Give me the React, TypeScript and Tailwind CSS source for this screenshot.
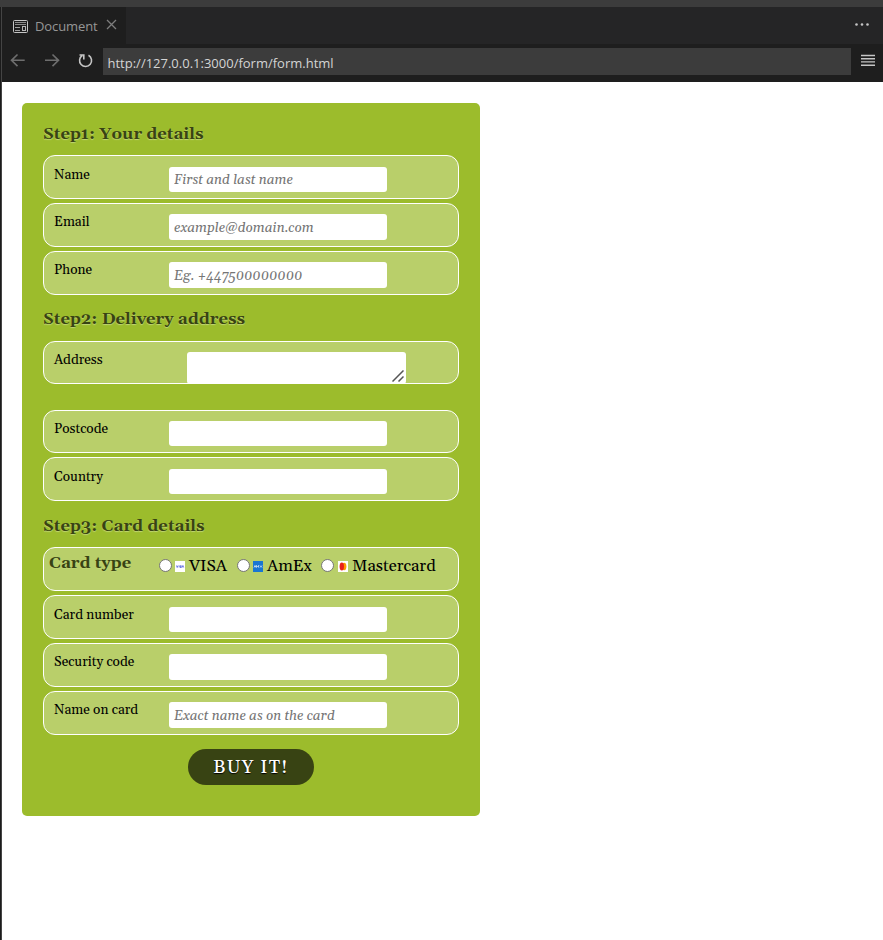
import React from "react";

const serif = "font-[Gelasio,Georgia,'Liberation_Serif',serif]";

function Heading({ children, className }: { children: string; className: string }) {
  return (
    <h2 className={`h-6 pl-[21px] text-[16.65px] leading-[28px] font-bold text-[#384313] [text-shadow:0_1px_1px_#c0d576] ${className}`}>
      {children}
    </h2>
  );
}

function Row({ label, className, field, placeholder }: { label: string; className: string; field: string; placeholder?: string }) {
  return (
    <div className={`mx-[21px] flex items-start rounded-[12px] border border-white bg-[#b9cf6a] ${className}`}>
      <label className="w-[115px] shrink-0 pl-[10px] text-[13.6px] leading-5 text-black">{label}</label>
      <input
        placeholder={placeholder}
        className={`ml-[10px] w-[218px] rounded-[3px] bg-white pl-[5px] text-[13.6px] italic outline-none placeholder:text-[#757575] placeholder:opacity-100 ${field}`}
      />
    </div>
  );
}

function Radio() {
  return <span className="mt-[11px] size-[13px] shrink-0 rounded-full border border-[#767676] bg-white" />;
}

export default function App() {
  return (
    <div className="flex h-[940px] w-[883px] flex-col overflow-hidden bg-white">
      <div className="h-[7px] shrink-0 bg-[#3c3c3c]" />
      <div className="flex min-h-0 flex-1">
        <div className="w-[2px] shrink-0 border-r border-[#444444] bg-[#1b1b1b]" />
        <div className="flex min-w-0 flex-1 flex-col font-['Open_Sans','Noto_Sans',sans-serif]">
          <div className="flex h-[37px] shrink-0 bg-[#252526]">
            <div className="flex w-[124px] items-center bg-[#1e1e1e] pl-[11px] text-[13px] text-[#969696]">
              <svg width="15" height="13" viewBox="0 0 15 13" className="shrink-0 translate-y-[1px]" fill="none">
                <rect x="0.5" y="0.5" width="14" height="12" rx="1" stroke="#c5c5c5" />
                <path d="M2 2.5h11M2 4.5h11" stroke="#8c8c8c" />
                <path d="M2 7.5h5M2 10.5h5" stroke="#a0a0a0" />
                <rect x="9.500" y="6.500" width="3" height="4" stroke="#b5b5b5" />
              </svg>
              <span className="ml-[7px] w-[64px] translate-y-[1px] tracking-[-0.1px]">Document</span>
              <svg width="11" height="11" viewBox="0 0 11 11" className="ml-[7px] -translate-y-[1px]" fill="none" stroke="#7d7d7d" strokeWidth="1.3">
                <path d="M1 1l9 9M10 1l-9 9" />
              </svg>
            </div>
            <div className="flex flex-1 justify-end pt-[16px] pr-[14px]">
              <svg width="14" height="3" viewBox="0 0 14 3" fill="#c5c5c5">
                <circle cx="1.5" cy="1.5" r="1.3" /><circle cx="7" cy="1.5" r="1.3" /><circle cx="12.5" cy="1.5" r="1.3" />
              </svg>
            </div>
          </div>
          <div className="flex h-[38px] shrink-0 items-start bg-[#1e1e1e] pt-1">
            <svg width="101" height="27" viewBox="0 0 101 27" fill="none" className="shrink-0">
              <path d="M9.5 12.3h13.2M15.5 6.5l-6 5.8 6 5.8" stroke="#6e6e6e" strokeWidth="1.6" />
              <path d="M43 12.3h13.2M50.500 6.5l6 5.800-6 5.800" stroke="#6e6e6e" strokeWidth="1.6" />
              <path d="M86.500 7.300A6 6 0 1 1 80.300 7.500M77.500 7h4.300v4.600" stroke="#c5c5c5" strokeWidth="1.6" />
            </svg>
            <div className="h-[27px] w-[748px] bg-[#3c3c3c] pl-[4.5px] text-[13px] leading-[30px] text-[#d4d4d4]">
              http://127.0.0.1:3000/form/form.html
            </div>
            <svg width="14" height="13" viewBox="0 0 14 13" className="mt-[6px] ml-[10px]" stroke="#c5c5c5" strokeWidth="1.4">
              <path d="M0 1.500h14M0 4.700h14M0 7.900h14M0 11.200h14" />
            </svg>
          </div>
          <main className="flex-1 bg-white pt-[21px] pl-[20px]">
            <form className={`flex h-[713px] w-[458px] flex-col rounded-[5px] bg-[#9cbc2c] ${serif}`}>
              <Heading className="mt-[18px]">Step1: Your details</Heading>
              <Row label="Name" placeholder="First and last name" className="mt-[10px] h-[44px] pt-[9px]" field="mt-[2px] h-[25px]" />
              <Row label="Email" placeholder="example@domain.com" className="mt-1 h-[44px] pt-[8px]" field="mt-[2px] h-[26px] pt-[2px]" />
              <Row label="Phone" placeholder="Eg. +447500000000" className="mt-1 h-[44px] pt-[8px]" field="mt-[2px] h-[26px] pt-[2px]" />
              <Heading className="mt-[11px]">Step2: Delivery address</Heading>
              <div className="mx-[21px] mt-[11px] flex h-[43px] items-start rounded-[12px] border border-white bg-[#b9cf6a]">
                <label className="w-[143px] shrink-0 pt-[8px] pl-[10px] text-[13.6px] leading-5 text-black">Address</label>
                <div className="mt-[10px] flex h-8 w-[219px] items-end justify-end rounded-[3px] bg-white pr-[2px] pb-[2px]">
                  <svg width="12" height="12" viewBox="0 0 12 12" stroke="#555" strokeWidth="1.5">
                    <path d="M.5 11.500l11-11M6.500 11.500l5-5" />
                  </svg>
                </div>
              </div>
              <Row label="Postcode" className="mt-[26px] h-[43px] pt-[8px]" field="mt-[2px] h-[25px]" />
              <Row label="Country" className="mt-1 h-[44px] pt-[9px]" field="mt-[2px] h-[25px]" />
              <Heading className="mt-[12px]">Step3: Card details</Heading>
              <div className="mx-[21px] mt-[10px] flex h-[44px] items-start rounded-[12px] border border-white bg-[#b9cf6a] text-[16.6px] leading-6 text-black">
                <h2 className="w-[115px] shrink-0 pt-[4px] pl-[5px] text-[16.65px] font-bold text-[#384313] [text-shadow:0_1px_1px_#c0d576]">Card type</h2>
                <Radio />
                <svg width="10" height="11" viewBox="0 0 10 11" className="mt-[13px] ml-[3px] shrink-0">
                  <path fill="#fff" d="M0 0h10v11H0z" />
                  <path d="M1.500 4.500l.7 2 .8-2M4.200 4.500v2M6.500 4.700H5.300v.8h1v1H5M7.200 6.500l.7-2 .8 2" fill="none" stroke="#3949d8" strokeWidth=".7" />
                </svg>
                <span className="mt-[7px] ml-[4px] w-[48px]">VISA</span>
                <Radio />
                <svg width="10" height="11" viewBox="0 0 10 11" className="mt-[13px] ml-[3px] shrink-0">
                  <path fill="#1976d2" d="M0 0h10v11H0z" />
                  <path d="M1 6.500l1-2 1 2M3.500 6.500v-2l1 1 1-1v2M7 4.500l2 2M9 4.500l-2 2" fill="none" stroke="#fff" strokeWidth=".7" />
                </svg>
                <span className="mt-[7px] ml-[4px] w-[54px]">AmEx</span>
                <Radio />
                <svg width="10" height="11" viewBox="0 0 10 11" className="mt-[13px] ml-[4px] shrink-0">
                  <path fill="#fff" d="M0 0h10v11H0z" />
                  <ellipse cx="6.200" cy="5.500" rx="2.200" ry="3.700" fill="#ff9800" />
                  <ellipse cx="3.800" cy="5.500" rx="2.200" ry="4" fill="#e8201c" />
                </svg>
                <span className="mt-[7px] ml-[4px]">Mastercard</span>
              </div>
              <Row label="Card number" className="mt-1 h-[44px] pt-[9px]" field="mt-[2px] h-[25px]" />
              <Row label="Security code" className="mt-1 h-[44px] pt-[8px]" field="mt-[2px] h-[26px]" />
              <Row label="Name on card" placeholder="Exact name as on the card" className="mt-1 h-[44px] pt-[8px]" field="mt-[2px] h-[26px] pt-[2px]" />
              <button type="button" className="mt-[14px] ml-[166px] h-9 w-[126px] rounded-full bg-[#384313] text-[18px] leading-[38px] font-medium tracking-[1.25px] text-white [text-shadow:0_1px_1px_#000]">
                BUY IT!
              </button>
            </form>
          </main>
        </div>
      </div>
    </div>
  );
}
